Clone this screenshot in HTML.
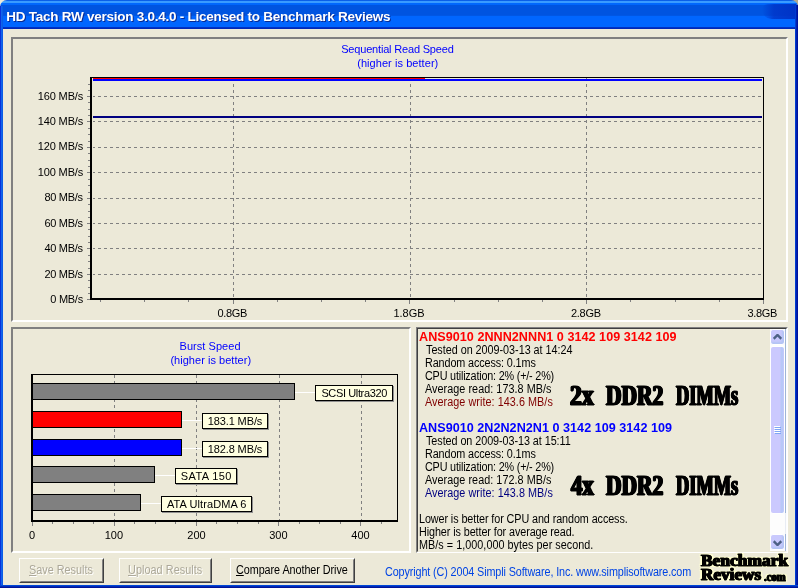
<!DOCTYPE html>
<html lang="en"><head><meta charset="utf-8"><title>HD Tach RW version 3.0.4.0 - Licensed to Benchmark Reviews</title>
<style>
html,body{margin:0;padding:0;}
body{width:798px;height:588px;overflow:hidden;background:#ece9d8;font-family:"Liberation Sans",sans-serif;font-size:11px;position:relative;}
.abs{position:absolute;}
.t{position:absolute;white-space:pre;}
#win{position:absolute;left:0;top:0;width:798px;height:588px;overflow:hidden;background:#ece9d8;}
#titlebar{position:absolute;left:0;top:0;width:798px;height:29px;border-radius:7px 7px 0 0;
 background:linear-gradient(to bottom,#0a5fe8 0px,#0a5fe8 0.8px,#3a9bff 1px,#3a9bff 2.7px,#0068ff 3.1px,#0066fb 4.7px,#0054e0 5.3px,#0054e0 15.4px,#0066ff 16px,#0066ff 26.7px,#0034c8 27.3px,#0022b0 29px);}
#tbr{position:absolute;left:762px;top:4px;width:34px;height:15px;background:linear-gradient(to right,rgba(0,52,200,0),rgba(0,52,200,0.8) 35%,rgba(0,48,196,0.92));border-radius:8px 0 0 14px;}
#bl{position:absolute;left:0;top:6px;width:3px;height:582px;background:linear-gradient(to right,#0831d9 0,#0831d9 1px,#1468ee 1px,#0858e2 3px);}
#br{position:absolute;left:795px;top:5px;width:3px;height:583px;background:linear-gradient(to right,#003cd0 0,#003cd0 1px,#0020b0 1px,#0020b0 2px,#00129c 2px);}
#bb{position:absolute;left:0;top:585px;width:798px;height:3px;background:linear-gradient(to bottom,#0048d8 0,#0048d8 1px,#0028b8 1px,#0028b8 2px,#001498 2px);}
.panel{position:absolute;box-sizing:border-box;border:2px solid;border-color:#808080 #fff #fff #808080;}
#list{position:absolute;box-sizing:border-box;left:416px;top:327px;width:372px;height:226px;border:1px solid;border-color:#808080 #fff #fff #808080;}
#list>i{position:absolute;left:0;top:0;right:0;bottom:0;border:1px solid;border-color:#404040 #fff #ece9d8 #404040;}
.btn{position:absolute;box-sizing:border-box;top:558px;height:25px;border:1px solid;border-color:#fff #404040 #404040 #fff;background:#ece9d8;}
.btn>i{position:absolute;left:0;top:0;right:0;bottom:0;border:1px solid;border-color:#ece9d8 #808080 #808080 #ece9d8;}
.lbl{position:absolute;border:1px solid #000;background:#ffffe1;box-shadow:1px 1px 0 #909090;}
#sb{position:absolute;left:770px;top:329px;width:17px;height:222px;background:#fdfdfd;}
#sb:after{content:'';position:absolute;left:15px;top:0;width:1px;height:100%;background:linear-gradient(to bottom,#9fb5d8 0,#9fb5d8 184px,#e8ecf4 184px,#e8ecf4 205px,#9fb5d8 205px);}
.sbb{position:absolute;left:0;width:13px;height:14px;border:1px solid #fff;border-radius:3px;background:#c9c9fd;box-shadow:inset -2px -2px 2px #b4c4f4;}
#thumb{position:absolute;left:0;top:17px;width:13px;height:166px;border:1px solid #fff;border-radius:3px;background:linear-gradient(to right,#cbc9fe 0,#cbc9fe 9px,#b8c8f8 10px,#b8c8f8 12px,#cbc9fe 13px);}
.big{position:absolute;white-space:pre;font-family:"Liberation Serif",serif;font-weight:bold;color:#000;transform-origin:0 0;-webkit-text-stroke:1.2px #000;text-shadow:1.3px 0 0 #000,-1.3px 0 0 #000,0.6px 0 0 #000,-0.6px 0 0 #000;}
.logo{position:absolute;white-space:pre;font-family:"Liberation Serif",serif;font-weight:bold;color:#000;transform-origin:0 0;-webkit-text-stroke:1px #000;text-shadow:0.6px 0 0 #000,-0.6px 0 0 #000,0 0 2px #ffffc8,0 0 2px #ffffc8,0 0 3px #ffffc8,2px 1px 1px #ffffd0,-2px -1px 1px #ffffd0,2px -1px 1px #ffffd0,-2px 1px 1px #ffffd0;}
u{text-decoration:underline;}
#txt{position:absolute;left:0;top:0;width:798px;height:588px;will-change:transform;}
</style></head>
<body>
<div id="win">
<div class="abs" style="left:790px;top:0;width:8px;height:8px;background:#b4a98c"></div>
<div id="titlebar"><div id="tbr"></div></div>
<div id="bl"></div><div id="br"></div><div id="bb"></div>
<div class="panel" style="left:11px;top:37px;width:777px;height:285px"></div>
<div class="panel" style="left:11px;top:327px;width:400px;height:226px"></div>
<div id="list"><i></i></div>
<svg class="abs" style="left:13px;top:39px" width="773" height="281" viewBox="13 39 773 281" shape-rendering="crispEdges">
<line x1="93" x2="763" y1="96.5" y2="96.5" stroke="#808080" stroke-width="1" stroke-dasharray="3 3" stroke-dashoffset="1"/>
<line x1="93" x2="763" y1="121.5" y2="121.5" stroke="#808080" stroke-width="1" stroke-dasharray="3 3" stroke-dashoffset="1"/>
<line x1="93" x2="763" y1="147.5" y2="147.5" stroke="#808080" stroke-width="1" stroke-dasharray="3 3" stroke-dashoffset="1"/>
<line x1="93" x2="763" y1="172.5" y2="172.5" stroke="#808080" stroke-width="1" stroke-dasharray="3 3" stroke-dashoffset="1"/>
<line x1="93" x2="763" y1="198.5" y2="198.5" stroke="#808080" stroke-width="1" stroke-dasharray="3 3" stroke-dashoffset="1"/>
<line x1="93" x2="763" y1="223.5" y2="223.5" stroke="#808080" stroke-width="1" stroke-dasharray="3 3" stroke-dashoffset="1"/>
<line x1="93" x2="763" y1="248.5" y2="248.5" stroke="#808080" stroke-width="1" stroke-dasharray="3 3" stroke-dashoffset="1"/>
<line x1="93" x2="763" y1="274.5" y2="274.5" stroke="#808080" stroke-width="1" stroke-dasharray="3 3" stroke-dashoffset="1"/>
<line x1="233.5" x2="233.5" y1="78" y2="298" stroke="#808080" stroke-width="1" stroke-dasharray="3 3"/>
<line x1="410.5" x2="410.5" y1="78" y2="298" stroke="#808080" stroke-width="1" stroke-dasharray="3 3"/>
<line x1="586.5" x2="586.5" y1="78" y2="298" stroke="#808080" stroke-width="1" stroke-dasharray="3 3"/>
<line x1="87" x2="90" y1="96.5" y2="96.5" stroke="#808080"/>
<line x1="88" x2="90" y1="102.5" y2="102.5" stroke="#808080"/>
<line x1="88" x2="90" y1="109.5" y2="109.5" stroke="#808080"/>
<line x1="88" x2="90" y1="115.5" y2="115.5" stroke="#808080"/>
<line x1="87" x2="90" y1="121.5" y2="121.5" stroke="#808080"/>
<line x1="88" x2="90" y1="128.5" y2="128.5" stroke="#808080"/>
<line x1="88" x2="90" y1="134.5" y2="134.5" stroke="#808080"/>
<line x1="88" x2="90" y1="141.5" y2="141.5" stroke="#808080"/>
<line x1="87" x2="90" y1="147.5" y2="147.5" stroke="#808080"/>
<line x1="88" x2="90" y1="153.5" y2="153.5" stroke="#808080"/>
<line x1="88" x2="90" y1="160.5" y2="160.5" stroke="#808080"/>
<line x1="88" x2="90" y1="166.5" y2="166.5" stroke="#808080"/>
<line x1="87" x2="90" y1="172.5" y2="172.5" stroke="#808080"/>
<line x1="88" x2="90" y1="179.5" y2="179.5" stroke="#808080"/>
<line x1="88" x2="90" y1="185.5" y2="185.5" stroke="#808080"/>
<line x1="88" x2="90" y1="192.5" y2="192.5" stroke="#808080"/>
<line x1="87" x2="90" y1="198.5" y2="198.5" stroke="#808080"/>
<line x1="88" x2="90" y1="204.5" y2="204.5" stroke="#808080"/>
<line x1="88" x2="90" y1="211.5" y2="211.5" stroke="#808080"/>
<line x1="88" x2="90" y1="217.5" y2="217.5" stroke="#808080"/>
<line x1="87" x2="90" y1="223.5" y2="223.5" stroke="#808080"/>
<line x1="88" x2="90" y1="229.5" y2="229.5" stroke="#808080"/>
<line x1="88" x2="90" y1="236.5" y2="236.5" stroke="#808080"/>
<line x1="88" x2="90" y1="242.5" y2="242.5" stroke="#808080"/>
<line x1="87" x2="90" y1="248.5" y2="248.5" stroke="#808080"/>
<line x1="88" x2="90" y1="255.5" y2="255.5" stroke="#808080"/>
<line x1="88" x2="90" y1="261.5" y2="261.5" stroke="#808080"/>
<line x1="88" x2="90" y1="268.5" y2="268.5" stroke="#808080"/>
<line x1="87" x2="90" y1="274.5" y2="274.5" stroke="#808080"/>
<line x1="88" x2="90" y1="280.5" y2="280.5" stroke="#808080"/>
<line x1="88" x2="90" y1="287.5" y2="287.5" stroke="#808080"/>
<line x1="88" x2="90" y1="293.5" y2="293.5" stroke="#808080"/>
<line x1="87" x2="90" y1="299.5" y2="299.5" stroke="#808080"/>
<line x1="88" x2="90" y1="90.5" y2="90.5" stroke="#808080"/>
<line x1="88" x2="90" y1="84.5" y2="84.5" stroke="#808080"/>
<line x1="100.5" x2="100.5" y1="300" y2="302" stroke="#808080"/>
<line x1="144.5" x2="144.5" y1="300" y2="302" stroke="#808080"/>
<line x1="188.5" x2="188.5" y1="300" y2="302" stroke="#808080"/>
<line x1="233.5" x2="233.5" y1="300" y2="304" stroke="#808080"/>
<line x1="277.5" x2="277.5" y1="300" y2="302" stroke="#808080"/>
<line x1="321.5" x2="321.5" y1="300" y2="302" stroke="#808080"/>
<line x1="365.5" x2="365.5" y1="300" y2="302" stroke="#808080"/>
<line x1="409.5" x2="409.5" y1="300" y2="304" stroke="#808080"/>
<line x1="454.5" x2="454.5" y1="300" y2="302" stroke="#808080"/>
<line x1="498.5" x2="498.5" y1="300" y2="302" stroke="#808080"/>
<line x1="542.5" x2="542.5" y1="300" y2="302" stroke="#808080"/>
<line x1="586.5" x2="586.5" y1="300" y2="304" stroke="#808080"/>
<line x1="630.5" x2="630.5" y1="300" y2="302" stroke="#808080"/>
<line x1="675.5" x2="675.5" y1="300" y2="302" stroke="#808080"/>
<line x1="719.5" x2="719.5" y1="300" y2="302" stroke="#808080"/>
<line x1="763.5" x2="763.5" y1="300" y2="304" stroke="#808080"/>
<rect x="90" y="77" width="674" height="1" fill="#000"/>
<rect x="763" y="77" width="1" height="222" fill="#000"/>
<rect x="90" y="77" width="2" height="223" fill="#000"/>
<rect x="90" y="298" width="674" height="2" fill="#000"/>
<rect x="93" y="78" width="332" height="1" fill="#ff0000"/>
<rect x="93" y="79" width="669" height="2" fill="#0000ff"/>
<rect x="93" y="116" width="669" height="2" fill="#000080"/>
</svg>
<svg class="abs" style="left:13px;top:329px" width="396" height="222" viewBox="13 329 396 222" shape-rendering="crispEdges">
<line x1="114.5" x2="114.5" y1="375" y2="520" stroke="#808080" stroke-dasharray="3 3"/>
<line x1="196.5" x2="196.5" y1="375" y2="520" stroke="#808080" stroke-dasharray="3 3"/>
<line x1="279.5" x2="279.5" y1="375" y2="520" stroke="#808080" stroke-dasharray="3 3"/>
<line x1="361.5" x2="361.5" y1="375" y2="520" stroke="#808080" stroke-dasharray="3 3"/>
<line x1="32.5" x2="32.5" y1="522" y2="526" stroke="#808080"/>
<line x1="52.5" x2="52.5" y1="522" y2="524" stroke="#808080"/>
<line x1="73.5" x2="73.5" y1="522" y2="524" stroke="#808080"/>
<line x1="93.5" x2="93.5" y1="522" y2="524" stroke="#808080"/>
<line x1="114.5" x2="114.5" y1="522" y2="526" stroke="#808080"/>
<line x1="134.5" x2="134.5" y1="522" y2="524" stroke="#808080"/>
<line x1="155.5" x2="155.5" y1="522" y2="524" stroke="#808080"/>
<line x1="175.5" x2="175.5" y1="522" y2="524" stroke="#808080"/>
<line x1="196.5" x2="196.5" y1="522" y2="526" stroke="#808080"/>
<line x1="216.5" x2="216.5" y1="522" y2="524" stroke="#808080"/>
<line x1="237.5" x2="237.5" y1="522" y2="524" stroke="#808080"/>
<line x1="258.5" x2="258.5" y1="522" y2="524" stroke="#808080"/>
<line x1="278.5" x2="278.5" y1="522" y2="526" stroke="#808080"/>
<line x1="299.5" x2="299.5" y1="522" y2="524" stroke="#808080"/>
<line x1="319.5" x2="319.5" y1="522" y2="524" stroke="#808080"/>
<line x1="340.5" x2="340.5" y1="522" y2="524" stroke="#808080"/>
<line x1="360.5" x2="360.5" y1="522" y2="526" stroke="#808080"/>
<line x1="381.5" x2="381.5" y1="522" y2="524" stroke="#808080"/>
<rect x="32" y="383" width="263" height="17" fill="#000"/>
<rect x="33" y="384" width="261" height="15" fill="#808080"/>
<rect x="32" y="411" width="150" height="17" fill="#000"/>
<rect x="33" y="412" width="148" height="15" fill="#ff0000"/>
<rect x="32" y="439" width="150" height="17" fill="#000"/>
<rect x="33" y="440" width="148" height="15" fill="#0000ff"/>
<rect x="32" y="466" width="123" height="17" fill="#000"/>
<rect x="33" y="467" width="121" height="15" fill="#808080"/>
<rect x="32" y="494" width="109" height="17" fill="#000"/>
<rect x="33" y="495" width="107" height="15" fill="#808080"/>
<rect x="295" y="392" width="20" height="1" fill="#fff"/>
<rect x="182" y="420" width="20" height="1" fill="#fff"/>
<rect x="182" y="448" width="20" height="1" fill="#fff"/>
<rect x="155" y="475" width="20" height="1" fill="#fff"/>
<rect x="141" y="503" width="20" height="1" fill="#fff"/>
<rect x="31" y="374" width="367" height="1" fill="#000"/>
<rect x="397" y="374" width="1" height="147" fill="#000"/>
<rect x="31" y="374" width="2" height="148" fill="#000"/>
<rect x="31" y="520" width="367" height="2" fill="#000"/>
</svg>
<div class="lbl" style="left:315px;top:385px;width:76px;height:14px"></div>
<div class="lbl" style="left:202px;top:413px;width:64px;height:14px"></div>
<div class="lbl" style="left:202px;top:441px;width:64px;height:14px"></div>
<div class="lbl" style="left:175px;top:468px;width:60px;height:14px"></div>
<div class="lbl" style="left:161px;top:496px;width:89px;height:14px"></div>
<div id="sb"><div class="sbb" style="top:0"><svg class="abs" style="left:2px;top:4px" width="9" height="6" viewBox="0 0 9 6"><path d="M0.7 4.8 L4.5 1 L8.3 4.8" fill="none" stroke="#4d6185" stroke-width="2.4"/></svg></div><div id="thumb"><div class="abs" style="left:3px;top:79px;width:6px;height:8px;background:repeating-linear-gradient(to bottom,#fff 0,#fff 1px,rgba(0,0,0,0) 1px,rgba(0,0,0,0) 2px)"></div><div class="abs" style="left:4px;top:80px;width:6px;height:8px;background:repeating-linear-gradient(to bottom,#7ea6f4 0,#7ea6f4 1px,rgba(0,0,0,0) 1px,rgba(0,0,0,0) 2px)"></div></div><div class="sbb" style="top:205px"><svg class="abs" style="left:2px;top:5px" width="9" height="6" viewBox="0 0 9 6"><path d="M0.7 1.2 L4.5 5 L8.3 1.2" fill="none" stroke="#4d6185" stroke-width="2.4"/></svg></div></div>
<div class="btn" style="left:19px;width:85px"><i></i></div>
<div class="btn" style="left:119px;width:93px"><i></i></div>
<div class="btn" style="left:230px;width:125px"><i></i></div>
<div id="txt">
<span class="t" id="title" style="left:6.24px;top:7.52px;font-size:13.5px;line-height:18px;color:#fff;font-weight:bold;letter-spacing:-0.251px;text-shadow:1px 1px 0 #0a2a90;">HD Tach RW version 3.0.4.0 - Licensed to Benchmark Reviews</span>
<span class="t" id="seq1" style="left:341.20px;top:42.19px;font-size:11px;line-height:14px;color:#0000ff;letter-spacing:-0.180px;">Sequential Read Speed</span>
<span class="t" id="seq2" style="left:357.20px;top:55.69px;font-size:11px;line-height:14px;color:#0000ff;letter-spacing:0.059px;">(higher is better)</span>
<span class="t" id="bur1" style="left:179.58px;top:339.19px;font-size:11px;line-height:14px;color:#0000ff;letter-spacing:0.040px;">Burst Speed</span>
<span class="t" id="bur2" style="left:170.38px;top:352.79px;font-size:11px;line-height:14px;color:#0000ff;letter-spacing:0.035px;">(higher is better)</span>
<span class="t" id="y160" style="left:37.64px;top:89.19px;font-size:11px;line-height:14px;color:#000;letter-spacing:-0.114px;">160 MB/s</span>
<span class="t" id="y140" style="left:37.64px;top:114.19px;font-size:11px;line-height:14px;color:#000;letter-spacing:-0.114px;">140 MB/s</span>
<span class="t" id="y120" style="left:37.64px;top:139.19px;font-size:11px;line-height:14px;color:#000;letter-spacing:-0.114px;">120 MB/s</span>
<span class="t" id="y100" style="left:37.64px;top:165.19px;font-size:11px;line-height:14px;color:#000;letter-spacing:-0.114px;">100 MB/s</span>
<span class="t" id="y80" style="left:44.38px;top:190.19px;font-size:11px;line-height:14px;color:#000;letter-spacing:-0.267px;">80 MB/s</span>
<span class="t" id="y60" style="left:44.38px;top:216.19px;font-size:11px;line-height:14px;color:#000;letter-spacing:-0.267px;">60 MB/s</span>
<span class="t" id="y40" style="left:44.38px;top:241.19px;font-size:11px;line-height:14px;color:#000;letter-spacing:-0.267px;">40 MB/s</span>
<span class="t" id="y20" style="left:44.38px;top:267.19px;font-size:11px;line-height:14px;color:#000;letter-spacing:-0.267px;">20 MB/s</span>
<span class="t" id="y0" style="left:50.32px;top:292.19px;font-size:11px;line-height:14px;color:#000;letter-spacing:-0.280px;">0 MB/s</span>
<span class="t" id="x0" style="left:217.44px;top:306.19px;font-size:11px;line-height:14px;color:#000;letter-spacing:-0.300px;">0.8GB</span>
<span class="t" id="x1" style="left:393.52px;top:306.19px;font-size:11px;line-height:14px;color:#000;letter-spacing:-0.050px;">1.8GB</span>
<span class="t" id="x2" style="left:571.00px;top:306.19px;font-size:11px;line-height:14px;color:#000;letter-spacing:-0.300px;">2.8GB</span>
<span class="t" id="x3" style="left:747.38px;top:306.19px;font-size:11px;line-height:14px;color:#000;letter-spacing:-0.300px;">3.8GB</span>
<span class="t" id="b0" style="left:28.97px;top:527.79px;font-size:11px;line-height:14px;color:#000;">0</span>
<span class="t" id="b100" style="left:104.67px;top:527.79px;font-size:11px;line-height:14px;color:#000;">100</span>
<span class="t" id="b200" style="left:187.35px;top:527.79px;font-size:11px;line-height:14px;color:#000;">200</span>
<span class="t" id="b300" style="left:269.23px;top:527.79px;font-size:11px;line-height:14px;color:#000;">300</span>
<span class="t" id="b400" style="left:351.35px;top:527.79px;font-size:11px;line-height:14px;color:#000;">400</span>
<span class="t" id="l1" style="left:321.38px;top:386.19px;font-size:11px;line-height:14px;color:#000;letter-spacing:-0.367px;">SCSI Ultra320</span>
<span class="t" id="l2" style="left:207.70px;top:414.19px;font-size:11px;line-height:14px;color:#000;letter-spacing:-0.111px;">183.1 MB/s</span>
<span class="t" id="l3" style="left:207.70px;top:442.19px;font-size:11px;line-height:14px;color:#000;letter-spacing:-0.111px;">182.8 MB/s</span>
<span class="t" id="l4" style="left:180.82px;top:469.19px;font-size:11px;line-height:14px;color:#000;letter-spacing:0.371px;">SATA 150</span>
<span class="t" id="l5" style="left:167.00px;top:497.19px;font-size:11px;line-height:14px;color:#000;letter-spacing:0.077px;">ATA UltraDMA 6</span>
<span class="t" id="h1" style="left:419.10px;top:329.04px;font-size:12px;line-height:16px;color:#ff0000;font-weight:bold;letter-spacing:0.031px;transform:scaleX(1.05);transform-origin:0 0;">ANS9010 2NNN2NNN1 0 3142 109 3142 109</span>
<span class="t" id="r1" style="left:425.88px;top:342.04px;font-size:12px;line-height:16px;color:#000;letter-spacing:-0.025px;transform:scaleX(0.9);transform-origin:0 0;">Tested on 2009-03-13 at 14:24</span>
<span class="t" id="r2" style="left:425.08px;top:355.04px;font-size:12px;line-height:16px;color:#000;letter-spacing:-0.121px;transform:scaleX(0.9);transform-origin:0 0;">Random access: 0.1ms</span>
<span class="t" id="r3" style="left:425.08px;top:368.04px;font-size:12px;line-height:16px;color:#000;letter-spacing:-0.204px;transform:scaleX(0.9);transform-origin:0 0;">CPU utilization: 2% (+/- 2%)</span>
<span class="t" id="r4" style="left:424.88px;top:381.04px;font-size:12px;line-height:16px;color:#000;letter-spacing:0.057px;transform:scaleX(0.9);transform-origin:0 0;">Average read: 173.8 MB/s</span>
<span class="t" id="r5" style="left:424.88px;top:394.04px;font-size:12px;line-height:16px;color:#800000;letter-spacing:0.063px;transform:scaleX(0.9);transform-origin:0 0;">Average write: 143.6 MB/s</span>
<span class="t" id="h2" style="left:419.10px;top:420.04px;font-size:12px;line-height:16px;color:#0000ff;font-weight:bold;letter-spacing:0.022px;transform:scaleX(1.05);transform-origin:0 0;">ANS9010 2N2N2N2N1 0 3142 109 3142 109</span>
<span class="t" id="s1" style="left:425.88px;top:433.04px;font-size:12px;line-height:16px;color:#000;letter-spacing:-0.064px;transform:scaleX(0.9);transform-origin:0 0;">Tested on 2009-03-13 at 15:11</span>
<span class="t" id="s2" style="left:425.08px;top:446.04px;font-size:12px;line-height:16px;color:#000;letter-spacing:-0.121px;transform:scaleX(0.9);transform-origin:0 0;">Random access: 0.1ms</span>
<span class="t" id="s3" style="left:425.08px;top:459.04px;font-size:12px;line-height:16px;color:#000;letter-spacing:-0.204px;transform:scaleX(0.9);transform-origin:0 0;">CPU utilization: 2% (+/- 2%)</span>
<span class="t" id="s4" style="left:424.88px;top:472.04px;font-size:12px;line-height:16px;color:#000;letter-spacing:0.057px;transform:scaleX(0.9);transform-origin:0 0;">Average read: 172.8 MB/s</span>
<span class="t" id="s5" style="left:424.88px;top:485.04px;font-size:12px;line-height:16px;color:#000080;letter-spacing:0.063px;transform:scaleX(0.9);transform-origin:0 0;">Average write: 143.8 MB/s</span>
<span class="t" id="n1" style="left:418.98px;top:511.04px;font-size:12px;line-height:16px;color:#000;letter-spacing:-0.102px;transform:scaleX(0.9);transform-origin:0 0;">Lower is better for CPU and random access.</span>
<span class="t" id="n2" style="left:418.98px;top:524.04px;font-size:12px;line-height:16px;color:#000;letter-spacing:-0.097px;transform:scaleX(0.9);transform-origin:0 0;">Higher is better for average read.</span>
<span class="t" id="n3" style="left:418.98px;top:537.04px;font-size:12px;line-height:16px;color:#000;letter-spacing:0.039px;transform:scaleX(0.9);transform-origin:0 0;">MB/s = 1,000,000 bytes per second.</span>
<span class="t" id="bt1" style="left:29.30px;top:562.14px;font-size:12px;line-height:16px;color:#aca899;letter-spacing:0.027px;transform:scaleX(0.9);transform-origin:0 0;text-shadow:1px 1px 0 #fff;"><u>S</u>ave Results</span>
<span class="t" id="bt2" style="left:127.52px;top:562.14px;font-size:12px;line-height:16px;color:#aca899;letter-spacing:0.085px;transform:scaleX(0.9);transform-origin:0 0;text-shadow:1px 1px 0 #fff;"><u>U</u>pload Results</span>
<span class="t" id="bt3" style="left:236.20px;top:562.14px;font-size:12px;line-height:16px;color:#000;letter-spacing:-0.060px;transform:scaleX(0.9);transform-origin:0 0;"><u>C</u>ompare Another Drive</span>
<span class="t" id="copy" style="left:385.20px;top:564.04px;font-size:12px;line-height:16px;color:#0044e4;letter-spacing:-0.127px;transform:scaleX(0.9);transform-origin:0 0;">Copyright (C) 2004 Simpli Software, Inc. www.simplisoftware.com</span>
<span class="big" id="big2x0" style="left:570.30px;top:379.01px;font-size:29px;line-height:32px;transform:scaleX(0.8151)">2x</span>
<span class="big" id="big2x1" style="left:605.80px;top:379.01px;font-size:29px;line-height:32px;transform:scaleX(0.7409)">DDR2</span>
<span class="big" id="big2x2" style="left:676.20px;top:379.01px;font-size:29px;line-height:32px;transform:scaleX(0.6327)">DIMMs</span>
<span class="big" id="big4x0" style="left:571.30px;top:469.01px;font-size:29px;line-height:32px;transform:scaleX(0.7838)">4x</span>
<span class="big" id="big4x1" style="left:605.80px;top:469.01px;font-size:29px;line-height:32px;transform:scaleX(0.7409)">DDR2</span>
<span class="big" id="big4x2" style="left:676.20px;top:469.01px;font-size:29px;line-height:32px;transform:scaleX(0.6327)">DIMMs</span>
<span class="logo" id="lg1" style="left:701.00px;top:550.80px;font-size:16px;line-height:20px;transform:scaleX(1.0885)">Benchmark</span>
<span class="logo" id="lg2" style="left:701.00px;top:565.30px;font-size:16px;line-height:20px;transform:scaleX(1.0732)">Reviews</span>
<span class="logo" id="lg3" style="left:764.00px;top:566.65px;font-size:12px;line-height:20px;transform:scaleX(0.8877)">.com</span>
</div>
</div>
</body></html>
